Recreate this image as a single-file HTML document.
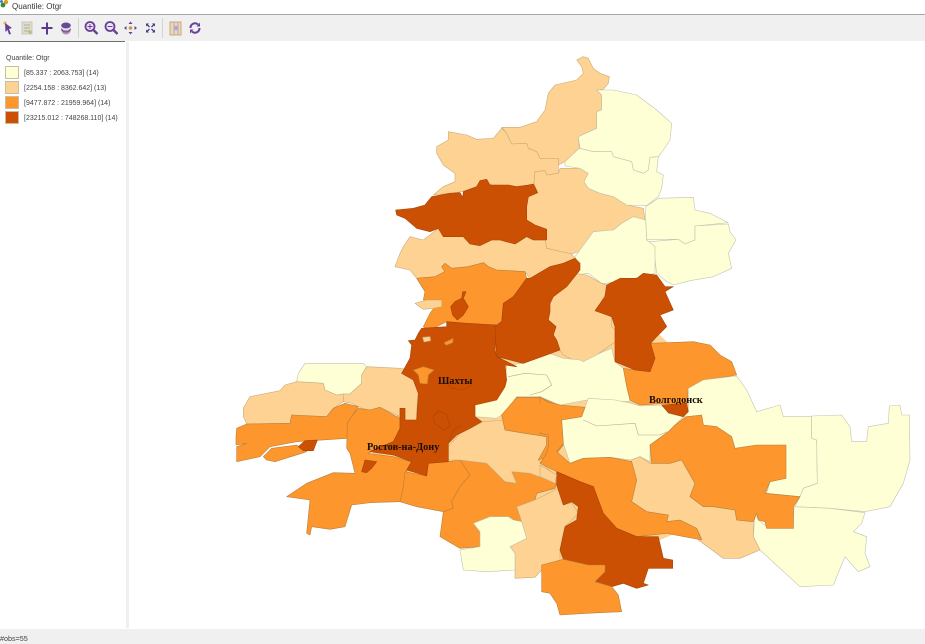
<!DOCTYPE html>
<html>
<head>
<meta charset="utf-8">
<style>
html,body{margin:0;padding:0;background:#fff}
#root{position:relative;width:925px;height:644px;overflow:hidden;background:#fff;font-family:"Liberation Sans",sans-serif;filter:blur(.3px)}
.abs{position:absolute}
.lg{position:absolute;left:24px;font-size:7px;color:#444;white-space:nowrap;line-height:9px}
.sw{position:absolute;left:5px;width:12px;height:11px;border:1px solid #c8bea0}
svg{position:absolute;left:0;top:0}
.p polygon{vector-effect:non-scaling-stroke;stroke-width:.6;stroke-linejoin:round}
.a{fill:#ffffd6;stroke:#c2c2ae}
.b{fill:#fed292;stroke:#c8ac78}
.c{fill:#fd962c;stroke:#b8803c}
.d{fill:#cc5003;stroke:#a84406}
.l{fill:none;stroke:#b0ac90;stroke-width:.6;vector-effect:non-scaling-stroke}
.ld{fill:none;stroke:#a84406;stroke-width:.6;vector-effect:non-scaling-stroke}
text{font-family:"Liberation Serif","DejaVu Serif",serif;font-weight:bold;font-size:10.3px;fill:#1a0f08}
</style>
</head>
<body>
<div id="root">
<svg width="925" height="644" viewBox="0 0 925 644">
<polygon points="440,330 600,280 730,400 800,480 660,540 560,560 470,520 365,465 420,380" fill="#fed292"/>
<g class="p" transform="translate(380,40) scale(.33333)">
<polygon class="b" points="590,60 610,50 625,55 640,85 660,100 688,110 685,130 670,148 650,150 665,165 665,210 650,215 650,265 595,290 598,325 555,365 535,375 535,355 480,355 470,335 445,325 440,310 395,312 380,280 365,262 420,262 470,245 495,210 505,160 525,135 590,120 610,100 605,80"/>
<polygon class="b" points="205,275 260,285 290,298 340,295 365,265 380,280 395,312 440,310 445,325 470,335 480,355 535,355 535,400 500,405 495,392 465,395 462,432 445,435 410,440 385,435 350,442 325,430 320,418 300,422 290,440 245,455 210,460 160,465 190,440 225,425 225,400 190,375 170,340 170,320 205,300"/>
<polygon class="b" points="465,395 495,392 500,405 535,400 540,385 600,385 625,400 612,425 625,445 660,460 700,470 740,495 790,505 795,540 760,530 725,550 700,570 640,575 610,630 575,642 500,625 495,600 500,568 465,555 440,540 440,500 445,470 473,458 462,432"/>
<polygon class="b" points="90,590 130,600 175,565 190,590 250,590 270,612 300,617 335,600 360,600 405,612 440,590 460,600 495,600 500,625 575,642 585,655 550,670 510,680 450,715 435,695 350,690 325,680 310,668 265,680 215,685 195,670 185,680 195,695 165,710 110,715 90,690 45,680 60,640 70,620"/>
<polygon class="d" points="47,510 100,505 135,495 155,470 210,460 240,458 248,472 250,455 290,440 300,422 320,418 330,435 385,435 410,440 445,435 460,432 473,458 445,470 440,500 440,540 465,555 500,568 500,600 460,600 440,590 405,612 360,600 335,600 300,617 270,612 250,590 190,590 175,565 150,575 110,565 75,535 50,525"/>
<polygon class="a" points="650,150 700,150 770,165 830,210 875,250 870,300 850,330 835,350 810,352 805,390 790,400 760,390 755,365 700,350 695,335 640,335 600,325 595,290 650,265 650,215 665,210 665,165"/>
<polygon class="a" points="598,325 640,335 695,335 700,350 755,365 760,390 790,400 805,390 810,352 835,350 830,395 850,405 845,445 835,470 800,497 740,495 700,470 660,460 625,445 612,425 625,400 600,385 555,378 555,365"/>
<polygon class="a" points="835,475 940,472 945,510 990,520 1045,548 945,558 945,600 915,612 895,598 800,598 797,540 797,500"/>
<polygon class="a" points="945,558 1045,552 1050,575 1068,600 1045,640 1055,685 1000,710 930,722 880,735 860,725 830,700 825,660 810,655 808,605 895,598 915,612 945,600"/>
<polygon class="a" points="585,650 640,575 700,570 725,550 760,530 797,540 800,600 825,620 825,700 780,712 680,730 665,730 625,700 585,705 600,680"/>
<polygon class="b" points="620,705 665,730 680,735 675,765 650,810 695,825 695,860 715,880 715,900 670,930 620,970 590,965 550,945 540,930 530,900 520,885 528,860 505,840 510,790 520,770 560,740 585,700"/>
<polygon class="c" points="110,715 165,710 195,695 185,680 195,670 215,685 265,680 310,668 325,680 350,690 435,695 440,715 400,770 370,790 365,845 345,855 255,850 200,845 170,860 150,875 130,860 150,820 165,800 185,790 185,780 130,780 135,755"/>
<polygon class="b" points="105,790 140,780 185,780 185,800 160,805 130,808"/>
<polygon class="d" points="212,800 225,785 245,775 248,755 258,755 250,775 265,800 250,825 232,840 218,825"/>
</g>

<g class="p" transform="translate(230,320) scale(.33333)">
<polygon class="a" points="735,255 800,240 825,200 830,135 880,130 945,95 1000,115 1050,120 1060,125 1120,95 1145,85 1155,125 1180,145 1195,200 1200,245 1070,240 990,255 930,230 860,230 830,275 800,295 735,290"/>
<polygon class="a" points="205,160 225,130 400,130 410,140 395,165 395,190 360,222 335,222 320,225 285,210 280,190 200,185"/>
<polygon class="b" points="40,265 60,230 150,212 165,195 200,185 280,190 285,210 320,225 340,222 340,245 310,265 290,290 185,285 180,310 50,312 40,290"/>
<polygon class="b" points="410,140 510,145 540,150 550,180 565,220 560,270 560,300 525,300 525,265 510,265 510,290 450,262 420,270 395,265 365,250 340,245 340,222 360,222 395,190 395,165"/>
<polygon class="c" points="18,350 20,325 50,312 180,310 185,285 290,290 310,265 345,250 385,260 365,290 352,310 352,355 200,365 120,380 90,410 20,425 20,380 50,370 18,375"/>
<polygon class="c" points="100,410 125,385 200,375 230,395 215,400 135,425 110,420"/>
<polygon class="d" points="205,380 225,362 262,360 250,392 220,392"/>
<polygon class="c" points="170,530 230,490 310,458 375,460 360,400 350,385 352,310 365,290 385,265 420,270 450,262 510,295 510,325 490,365 440,385 415,400 490,410 545,425 530,450 530,490 510,545 420,548 365,555 345,620 300,628 245,620 240,645 230,640 240,540"/>
<polygon class="d" points="395,455 405,420 440,425 425,445 410,458"/>
<polygon class="c" points="525,455 590,468 595,430 655,425 690,420 720,465 690,500 665,545 670,565 640,575 560,560 510,545 520,500"/>
<polygon class="c" points="690,420 770,430 825,485 860,490 845,455 900,460 980,490 975,505 920,520 915,540 860,560 875,605 850,600 835,590 780,590 730,610 750,635 750,680 690,685 630,650 640,575 670,565 665,545 690,500 720,465"/>
<polygon class="b" points="650,385 690,340 760,305 820,300 825,330 855,335 950,350 950,375 925,420 980,470 980,490 900,460 845,455 860,490 825,485 770,430 690,420 650,420"/>
<polygon class="c" points="815,285 860,232 930,232 990,258 1050,262 1065,262 1055,290 995,295 995,330 1000,375 980,400 925,420 950,375 950,350 855,335 825,330"/>
<polygon class="d" points="565,40 575,25 650,20 650,5 710,10 800,15 795,90 800,110 860,140 825,135 830,180 825,200 800,240 735,255 735,290 755,305 720,325 680,345 655,370 655,425 595,430 590,468 530,450 545,425 490,405 420,395 440,385 490,365 510,325 510,265 525,265 525,300 560,300 565,220 550,180 515,160 540,115 545,75 535,62 555,60"/>
<polygon class="b" points="578,52 600,50 602,62 582,66"/>
<polygon class="c" points="642,68 670,55 668,68 648,76"/>
<polygon class="c" points="550,150 580,140 612,150 595,165 592,192 570,190 565,165"/>
<polygon class="b" points="985,505 1000,555 1025,548 1045,580 1005,620 990,690 990,720 940,745 915,772 855,775 855,700 840,680 890,655 875,605 860,560 915,540 975,510"/>
<polygon class="a" points="730,610 780,590 835,590 850,600 875,605 890,655 840,680 855,700 855,750 770,755 700,750 690,690 750,680 750,635"/>
<polyline class="ld" points="610,290 625,272 650,285 660,320 640,330 615,310 610,290"/>
<polyline class="ld" points="640,180 665,205 700,210 725,195"/>
<polyline class="ld" points="655,370 670,330 695,315"/>
<polyline class="ld" points="800,15 795,90 800,110 860,140"/>
<polyline class="l" points="835,170 885,160 950,165 965,195 935,215 900,225"/>
</g>

<g class="p" transform="translate(540,320) scale(.33333)">
<polygon class="c" points="250,145 285,150 330,155 345,115 330,70 460,65 510,75 540,105 575,125 590,165 530,175 490,180 445,205 440,255 420,255 370,250 300,255 270,240 260,200"/>
<polygon class="a" points="445,205 490,180 530,175 590,168 620,210 650,275 720,255 730,290 815,290 815,355 830,360 832,490 790,505 780,530 680,520 690,485 735,475 735,375 650,378 645,385 585,385 575,350 530,320 490,315 485,285 445,290 430,290 445,270"/>
<polygon class="a" points="815,288 905,285 930,320 935,365 980,365 985,320 1045,310 1048,258 1080,255 1085,285 1108,285 1110,420 1090,490 1050,560 975,575 870,565 765,560 780,530 790,505 832,490 830,360 815,355"/>
<polygon class="a" points="645,580 655,600 680,620 760,625 762,560 870,565 975,578 965,610 940,635 980,650 975,700 990,740 955,755 915,710 880,795 780,800 660,690 640,650"/>
<polygon class="a" points="65,300 125,290 145,235 225,240 275,250 300,258 370,255 385,280 430,290 405,315 385,335 330,375 330,425 300,410 275,420 210,412 130,415 90,430 70,370"/>
<polygon class="d" points="365,255 440,250 445,275 430,290 385,278"/>
<polygon class="b" points="275,420 300,410 330,430 390,430 425,420 465,490 450,530 490,560 520,560 585,570 590,600 640,605 640,650 660,690 600,715 550,715 475,660 485,655 470,625 420,600 380,605 385,585 320,575 275,545"/>
<polygon class="c" points="330,375 385,335 405,315 440,290 485,285 490,315 530,320 575,350 585,385 650,375 738,375 738,475 690,485 675,520 780,530 760,560 760,625 680,625 675,605 655,600 650,580 640,605 590,600 585,570 520,560 490,560 450,530 465,490 425,420 390,430 335,430"/>
<polygon class="c" points="0,230 20,245 60,255 135,262 125,290 65,300 70,370 50,395 90,430 130,415 210,412 275,425 290,480 275,545 320,575 385,585 380,605 420,600 470,625 485,660 380,640 290,650 230,625 190,580 160,500 120,485 50,455 0,430 20,400 25,380 25,345 0,340"/>
<polygon class="d" points="50,455 120,485 160,500 190,580 230,625 290,650 355,650 370,715 398,720 398,745 325,745 310,790 325,795 290,805 250,790 215,800 165,785 195,755 195,735 145,735 70,718 60,690 75,620 110,600 115,560 95,545 70,555 50,495"/>
<polygon class="c" points="5,735 70,718 145,735 195,735 195,755 165,785 215,800 235,825 245,875 140,880 60,885 50,850 30,820 5,815"/>
<polyline class="l" points="130,300 170,318 285,310 295,345 360,345 380,335"/>
<polygon class="b" points="0,435 50,465 45,490 0,470"/>
<rect x="-6" y="250" width="12" height="85" fill="#fd962c"/>
</g>

<g class="p" transform="translate(380,40) scale(.33333)">
<polygon class="d" points="585,655 600,670 600,690 560,740 520,770 510,790 510,815 505,840 528,860 520,885 530,900 540,930 500,945 430,970 410,965 350,950 345,860 365,845 370,790 400,770 440,715 450,715 510,680 550,670"/>
<polygon class="d" points="680,735 720,715 770,715 790,700 830,705 855,740 880,740 855,755 880,810 840,825 860,860 830,890 812,910 825,955 810,995 765,990 705,965 705,860 695,830 645,812 675,770"/>
</g>

<text x="438" y="384">Шахты</text>
<text x="367" y="450">Ростов-на-Дону</text>
<text x="649" y="403">Волгодонск</text>
</svg>

<!-- title bar -->
<div class="abs" style="left:0;top:0;width:925px;height:15px;background:#fff;border-bottom:1px solid #a8a8a8;box-sizing:border-box"></div>
<svg width="12" height="12" style="left:0;top:0" viewBox="0 0 12 12">
<circle cx="3" cy="5" r="2.4" fill="#2f8f3a"/><circle cx="6" cy="2" r="2.2" fill="#d89a20"/><circle cx="1.5" cy="1.5" r="1.4" fill="#3468b0"/>
</svg>
<div class="abs" style="left:12px;top:1px;font-size:8px;line-height:12px;color:#333">Quantile: Otgr</div>

<!-- toolbar -->
<div class="abs" style="left:0;top:15px;width:925px;height:26px;background:#f0f0f0"></div>
<div class="abs" style="left:78px;top:18px;width:1px;height:20px;background:#d4d4d4"></div>
<div class="abs" style="left:162px;top:18px;width:1px;height:20px;background:#d4d4d4"></div>
<svg width="210" height="41" viewBox="0 0 210 41">
<circle cx="5" cy="23" r="1.6" fill="#e8c24a"/>
<path d="M5 23 L12 28 L9 29 L11 34 L9 34.5 L7.5 30 L5.5 32 Z" fill="#6a3f96"/>
<rect x="22" y="22" width="10" height="12" fill="#dedcd0" stroke="#c4c4b4" stroke-width=".8"/>
<path d="M24 25h6M24 28h6M24 31h6" stroke="#a8b29c" stroke-width="1"/>
<circle cx="30" cy="32" r="1.6" fill="#c8b860"/>
<path d="M47 22.500V34.500M41.500 28H52.500" stroke="#5a3a8e" stroke-width="2"/>
<ellipse cx="66" cy="25.500" rx="4.800" ry="3" fill="#6a4a92"/>
<path d="M61 27.500c0 5 2 7 5 7s5-2 5-7c-1.500 2-3 2.500-5 2.500s-3.500-.5-5-2.500z" fill="#b493bd"/>
<path d="M61.500 29.500c1.500 2 3 2.500 4.500 2.500s3-.5 4.500-2.500" fill="none" stroke="#5d4a8a" stroke-width="1"/>
<circle cx="90" cy="26.500" r="4.500" fill="#eee6f2" stroke="#6a3f96" stroke-width="1.800"/>
<path d="M93.500 30l4 4" stroke="#6a3f96" stroke-width="2.400"/>
<path d="M87.500 26.500h5M90 24v5" stroke="#6a3f96" stroke-width="1"/>
<circle cx="110" cy="26.500" r="4.500" fill="#eee6f2" stroke="#6a3f96" stroke-width="1.800"/>
<path d="M113.500 30l4 4" stroke="#6a3f96" stroke-width="2.400"/>
<path d="M107.500 26.500h5" stroke="#6a3f96" stroke-width="1"/>
<circle cx="130.500" cy="28" r="1.800" fill="#c89a50"/>
<path d="M130.500 21.500l2 2.500h-4zM130.500 34.500l2-2.500h-4zM124 28l2.500-2v4zM137 28l-2.500-2v4z" fill="#6a3f96"/>
<path d="M146 23.500h3l-3 3zM155 23.500h-3l3 3zM146 32.500h3l-3-3zM155 32.500h-3l3-3z" fill="#4a3a86"/>
<path d="M147 24.500l2.500 2.500M154 24.500l-2.500 2.500M147 31.500l2.500-2.500M154 31.500l-2.500-2.500" stroke="#4a3a86" stroke-width="1.300"/>
<rect x="170" y="22" width="11" height="13" fill="#e8d8bc" stroke="#d0a868" stroke-width="1"/>
<path d="M174 22v13M178 22v13" stroke="#b4a8c4" stroke-width="1"/>
<circle cx="176" cy="28" r="2.200" fill="#b9a4c8"/>
<path d="M190.500 28a4.500 4.500 0 0 1 7.500-3.500" fill="none" stroke="#6a3f96" stroke-width="2"/>
<path d="M199.500 28a4.500 4.500 0 0 1-7.500 3.500" fill="none" stroke="#6a3f96" stroke-width="2"/>
<path d="M196.500 26.500h3.500v-4zM193.500 29.500h-3.500v4z" fill="#6a3f96"/>
</svg>
<div class="abs" style="left:0;top:41px;width:125px;height:1px;background:#6e6e6e"></div>

<!-- legend panel -->
<div class="abs" style="left:126px;top:42px;width:3px;height:586px;background:#efefef"></div>
<div class="abs" style="left:6px;top:54px;font-size:7px;line-height:9px;color:#444">Quantile: Otgr</div>
<div class="sw" style="top:66px;background:#ffffd6"></div>
<div class="sw" style="top:81px;background:#fed292"></div>
<div class="sw" style="top:96px;background:#fd962c"></div>
<div class="sw" style="top:111px;background:#cc5003"></div>
<div class="lg" style="top:69px">[85.337 : 2063.753] (14)</div>
<div class="lg" style="top:84px">[2254.158 : 8362.642] (13)</div>
<div class="lg" style="top:99px">[9477.872 : 21959.964] (14)</div>
<div class="lg" style="top:114px">[23215.012 : 748268.110] (14)</div>

<!-- status bar -->
<div class="abs" style="left:0;top:629px;width:925px;height:15px;background:#f0f0f0"></div>
<div class="abs" style="left:0;top:633px;font-size:7.2px;line-height:11px;color:#444">#obs=55</div>
</div>
</body>
</html>
